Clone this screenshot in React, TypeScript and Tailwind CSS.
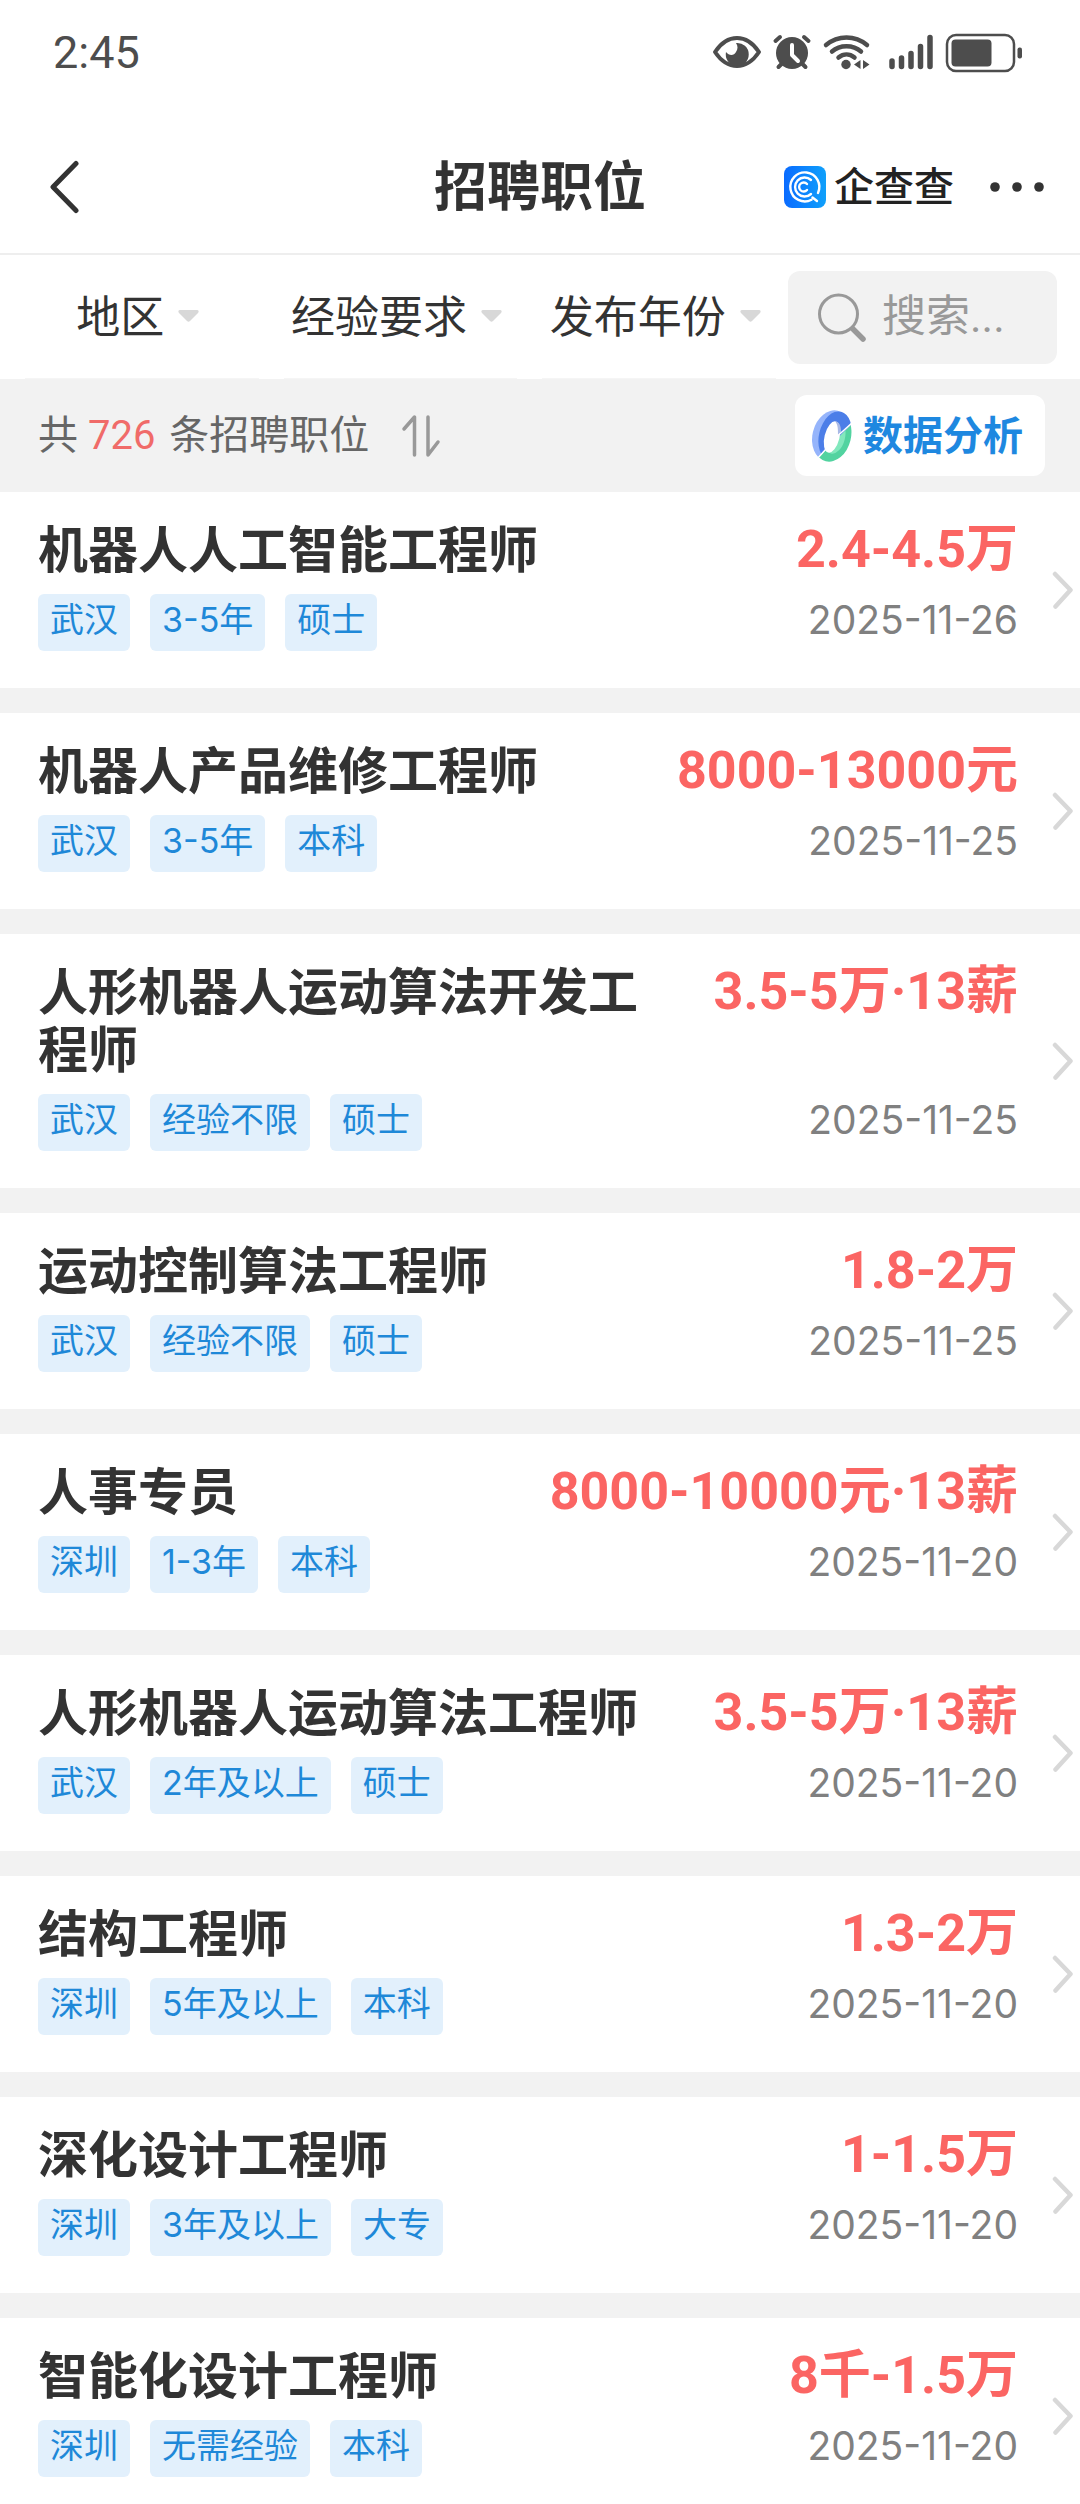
import React from 'react';

type Job = {
  title: string;
  salary: string;
  date: string;
  tags: string[];
};

const filters = ['地区', '经验要求', '发布年份'];

const jobs: Job[] = [
  { title: '机器人人工智能工程师', salary: '2.4-4.5万', date: '2025-11-26', tags: ['武汉', '3-5年', '硕士'] },
  { title: '机器人产品维修工程师', salary: '8000-13000元', date: '2025-11-25', tags: ['武汉', '3-5年', '本科'] },
  { title: '人形机器人运动算法开发工程师', salary: '3.5-5万·13薪', date: '2025-11-25', tags: ['武汉', '经验不限', '硕士'] },
  { title: '运动控制算法工程师', salary: '1.8-2万', date: '2025-11-25', tags: ['武汉', '经验不限', '硕士'] },
  { title: '人事专员', salary: '8000-10000元·13薪', date: '2025-11-20', tags: ['深圳', '1-3年', '本科'] },
  { title: '人形机器人运动算法工程师', salary: '3.5-5万·13薪', date: '2025-11-20', tags: ['武汉', '2年及以上', '硕士'] },
  { title: '结构工程师', salary: '1.3-2万', date: '2025-11-20', tags: ['深圳', '5年及以上', '本科'] },
  { title: '深化设计工程师', salary: '1-1.5万', date: '2025-11-20', tags: ['深圳', '3年及以上', '大专'] },
  { title: '智能化设计工程师', salary: '8千-1.5万', date: '2025-11-20', tags: ['深圳', '无需经验', '本科'] },
];

const StatusIcons: React.FC = () => (
  <svg width="312" height="40" viewBox="0 0 312 40" fill="none" stroke="#4d4d4d" strokeLinecap="round" strokeLinejoin="round" aria-hidden="true">
    {/* eye */}
    <path d="M3 19C9 10 17 5 25 5s16 5 22 14c-6 9-14 14-22 14S9 28 3 19Z" strokeWidth="4" />
    <path d="M24 10a11.500 11.500 0 1 1-10 9c3 4 8 4 10 0 2-3 2-6 0-9Z" fill="#4d4d4d" stroke="none" />
    {/* alarm clock */}
    <circle cx="80" cy="20" r="16" fill="#4d4d4d" stroke="none" />
    <path d="m63.500 8 4.500-4M96.500 8 92 4M66.500 34l3-3M93.500 34l-3-3" strokeWidth="4" />
    <path d="M80 12v10l6 6" stroke="#fff" strokeWidth="4" />
    {/* wifi */}
    <path d="M114 12c12-10 29-10 41 0M120 18.500c8-7 21-7 29 0M126.500 24.500c5-4 11-4 16 0" strokeWidth="4.500" />
    <circle cx="134" cy="31.500" r="4.700" fill="#4d4d4d" stroke="none" />
    <path d="m142 31.500 6.500-4.500v9ZM151 27v9l6.500-4.500Z" fill="#4d4d4d" stroke="none" />
    {/* signal */}
    <path d="M180 28v5.500M189.500 25v8.500M199 20.500v13M208.500 13.500v20M218 4.500v29" strokeWidth="5.500" />
    {/* battery */}
    <rect x="235" y="2" width="67" height="36" rx="9" strokeWidth="2.500" />
    <rect x="239.500" y="6.500" width="40" height="27" rx="4" fill="#4d4d4d" stroke="none" />
    <rect x="305.500" y="14.500" width="4.500" height="11" rx="2" fill="#4d4d4d" stroke="none" />
  </svg>
);

const BrandLogo: React.FC = () => (
  <svg width="42" height="42" viewBox="0 0 42 42" fill="none" stroke="#fff" strokeLinecap="round" aria-hidden="true">
    <defs>
      <linearGradient id="brand" x1="0" y1="0" x2="1" y2="0">
        <stop offset="0" stopColor="#0a6bff" />
        <stop offset="1" stopColor="#0fa0fb" />
      </linearGradient>
    </defs>
    <rect width="42" height="42" rx="8" fill="url(#brand)" stroke="none" />
    <path d="M34 27A14.500 14.500 0 1 0 27.500 33.800M28.500 31.500l4.500 3.500" strokeWidth="2.400" />
    <path d="M27 14a9.500 9.500 0 1 0 0 14" strokeWidth="2.400" />
    <path d="M23 18a4.500 4.500 0 1 0 0 6" strokeWidth="2.400" />
  </svg>
);

const ChartIcon: React.FC = () => (
  <svg width="42" height="52" viewBox="0 0 42 52" aria-hidden="true">
    <defs>
      <clipPath id="upper">
        <path d="M-2-2h46v13L7 48l-9 4Z" />
      </clipPath>
      <clipPath id="lower">
        <path d="M44 11v43H2l5-6Z" />
      </clipPath>
    </defs>
    <g clipPath="url(#upper)">
      <ellipse cx="20.500" cy="26" rx="19" ry="26" transform="rotate(14 20.500 26)" fill="#95b4fb" />
      <ellipse cx="24" cy="26" rx="16" ry="25" transform="rotate(14 24 26)" fill="#4c7ee8" />
    </g>
    <g clipPath="url(#lower)">
      <ellipse cx="21" cy="26" rx="19" ry="26" transform="rotate(14 21 26)" fill="#52d3a0" />
      <ellipse cx="24" cy="27" rx="10" ry="17" transform="rotate(14 24 27)" fill="#82e8bd" />
    </g>
    <ellipse cx="21" cy="27" rx="7.500" ry="16" transform="rotate(14 21 27)" fill="#fff" />
    <path d="M24 11c4 1 6 4 6 11l-3 3c0-6 0-10-3-14Z" fill="#a9b9e6" />
    <path d="M42 12 26.500 26M15 39l-9 10" stroke="#fff" strokeWidth="1.500" />
  </svg>
);

const Chevron: React.FC = () => (
  <svg width="22" height="38" viewBox="0 0 22 38" fill="none" aria-hidden="true">
    <path d="m3 3 15.500 16L3.500 35.500" stroke="#d8d8d8" strokeWidth="4.500" strokeLinecap="round" strokeLinejoin="round" />
  </svg>
);

const JobRow: React.FC<{ job: Job }> = ({ job }) => (
  <li className="bg-white">
    <a href="#" className="flex items-center pl-[38px] pr-1.5">
      <div className="flex-1 pt-[29px] pb-[37px]">
        <div className="flex items-start justify-between gap-10">
          <h2 className="max-w-[608px] text-[50px] leading-[58px] font-bold text-[#333]">{job.title}</h2>
          <span className="shrink-0 font-[Roboto,'Noto_Sans_CJK_SC',sans-serif] text-[52px] leading-[58px] font-bold text-[#fb6563]">
            {job.salary}
          </span>
        </div>
        <div className="mt-[15px] flex items-start justify-between">
          <div className="flex gap-5">
            {job.tags.map((tag) => (
              <span key={tag} className="h-[57px] rounded-md bg-[#e2f0fc] px-3 text-[34px] leading-[52px] text-[#1e88d8]">
                {tag}
              </span>
            ))}
          </div>
          <time className="text-[39px] leading-[52px] text-[#808080]">{job.date}</time>
        </div>
      </div>
      <div className="ml-[34px]">
        <Chevron />
      </div>
    </a>
  </li>
);

const App: React.FC = () => {
  return (
    <div className="min-h-screen bg-white font-[Inter,'Noto_Sans_CJK_SC',sans-serif] text-[#333]">
      <div className="flex h-[106px] items-center justify-between pl-[53px] pr-14 text-[#4d4d4d]">
        <span className="font-[Roboto,sans-serif] text-[45px] leading-[52px]">2:45</span>
        <StatusIcons />
      </div>

      <header className="grid h-[149px] grid-cols-[1fr_auto_1fr] items-center border-b-2 border-[#eee] px-9 pt-3.5">
        <button type="button" aria-label="返回" className="justify-self-start pl-3">
          <svg width="32" height="54" viewBox="0 0 32 54" fill="none" aria-hidden="true">
            <path d="M28 3.500 5 27l23 23.500" stroke="#333" strokeWidth="5" strokeLinecap="round" strokeLinejoin="round" />
          </svg>
        </button>
        <h1 className="text-[53px] leading-[60px] font-bold">招聘职位</h1>
        <div className="flex items-center justify-self-end">
          <BrandLogo />
          <span className="ml-2 text-[40px] leading-[48px] font-medium text-[#222]">企查查</span>
          <button type="button" aria-label="更多" className="ml-9">
            <svg width="54" height="12" viewBox="0 0 54 12" fill="#333" aria-hidden="true">
              <circle cx="5" cy="6" r="4.800" />
              <circle cx="27" cy="6" r="4.800" />
              <circle cx="49" cy="6" r="4.800" />
            </svg>
          </button>
        </div>
      </header>

      <div className="flex h-[124px] items-center pl-[25px] pr-[23px]">
        <div className="flex flex-1 gap-[25px] self-stretch">
          {filters.map((name) => (
            <div key={name} className="flex flex-1 items-center justify-center gap-3.5 border-b border-[#f5f5f5] pr-2">
              <select aria-label={name} className="appearance-none bg-transparent text-[44px] leading-[56px]">
                <option>{name}</option>
              </select>
              <svg width="21" height="13" viewBox="0 0 21 13" className="shrink-0" aria-hidden="true">
                <path d="M2 0h17c2 0 2 2 1 3l-8 8c-1 1-2 1-3 0L1 3C0 2 0 0 2 0Z" fill="#d8d8d8" />
              </svg>
            </div>
          ))}
        </div>
        <label className="ml-3 flex h-[93px] w-[269px] items-center rounded-xl bg-[#f2f2f2] pl-[30px]">
          <svg width="48" height="50" viewBox="0 0 48 50" fill="none" stroke="#999" strokeLinecap="round" className="shrink-0" aria-hidden="true">
            <circle cx="20.500" cy="22" r="19" strokeWidth="3" />
            <path d="m35 37 10 10" strokeWidth="5.500" />
          </svg>
          <input
            type="text"
            aria-label="搜索"
            placeholder="搜索..."
            className="ml-4 w-full min-w-0 bg-transparent font-[Roboto,'Noto_Sans_CJK_SC',sans-serif] text-[44px] leading-[56px] outline-none placeholder:text-[#999]"
          />
        </label>
      </div>

      <main className="bg-[#f2f2f2]">
        <div className="flex h-[113px] items-center justify-between pl-[38px] pr-[35px]">
          <div className="flex items-center text-[#666]">
            <p className="font-[Roboto,'Noto_Sans_CJK_SC',sans-serif] text-[40px] leading-[52px]">
              共 <span className="mr-1 text-[#f06b69]">726</span> 条招聘职位
            </p>
            <button type="button" aria-label="排序" className="ml-8">
              <svg width="40" height="44" viewBox="0 0 40 44" fill="none" stroke="#999" strokeWidth="3.500" strokeLinecap="round" strokeLinejoin="round" aria-hidden="true">
                <path d="M3 15 13.500 3v38M27 3v38l10-13" />
              </svg>
            </button>
          </div>
          <button type="button" className="flex h-[81px] w-[250px] items-center rounded-xl bg-white pl-4 text-[40px] leading-[52px] font-bold text-[#1e88e0]">
            <ChartIcon />
            <span className="ml-2.5 whitespace-nowrap">数据分析</span>
          </button>
        </div>

        <ul className="flex flex-col gap-[25px]">
          {jobs.map((job, index) => (
            <JobRow key={index} job={job} />
          ))}
        </ul>
      </main>
    </div>
  );
};

export default App;
